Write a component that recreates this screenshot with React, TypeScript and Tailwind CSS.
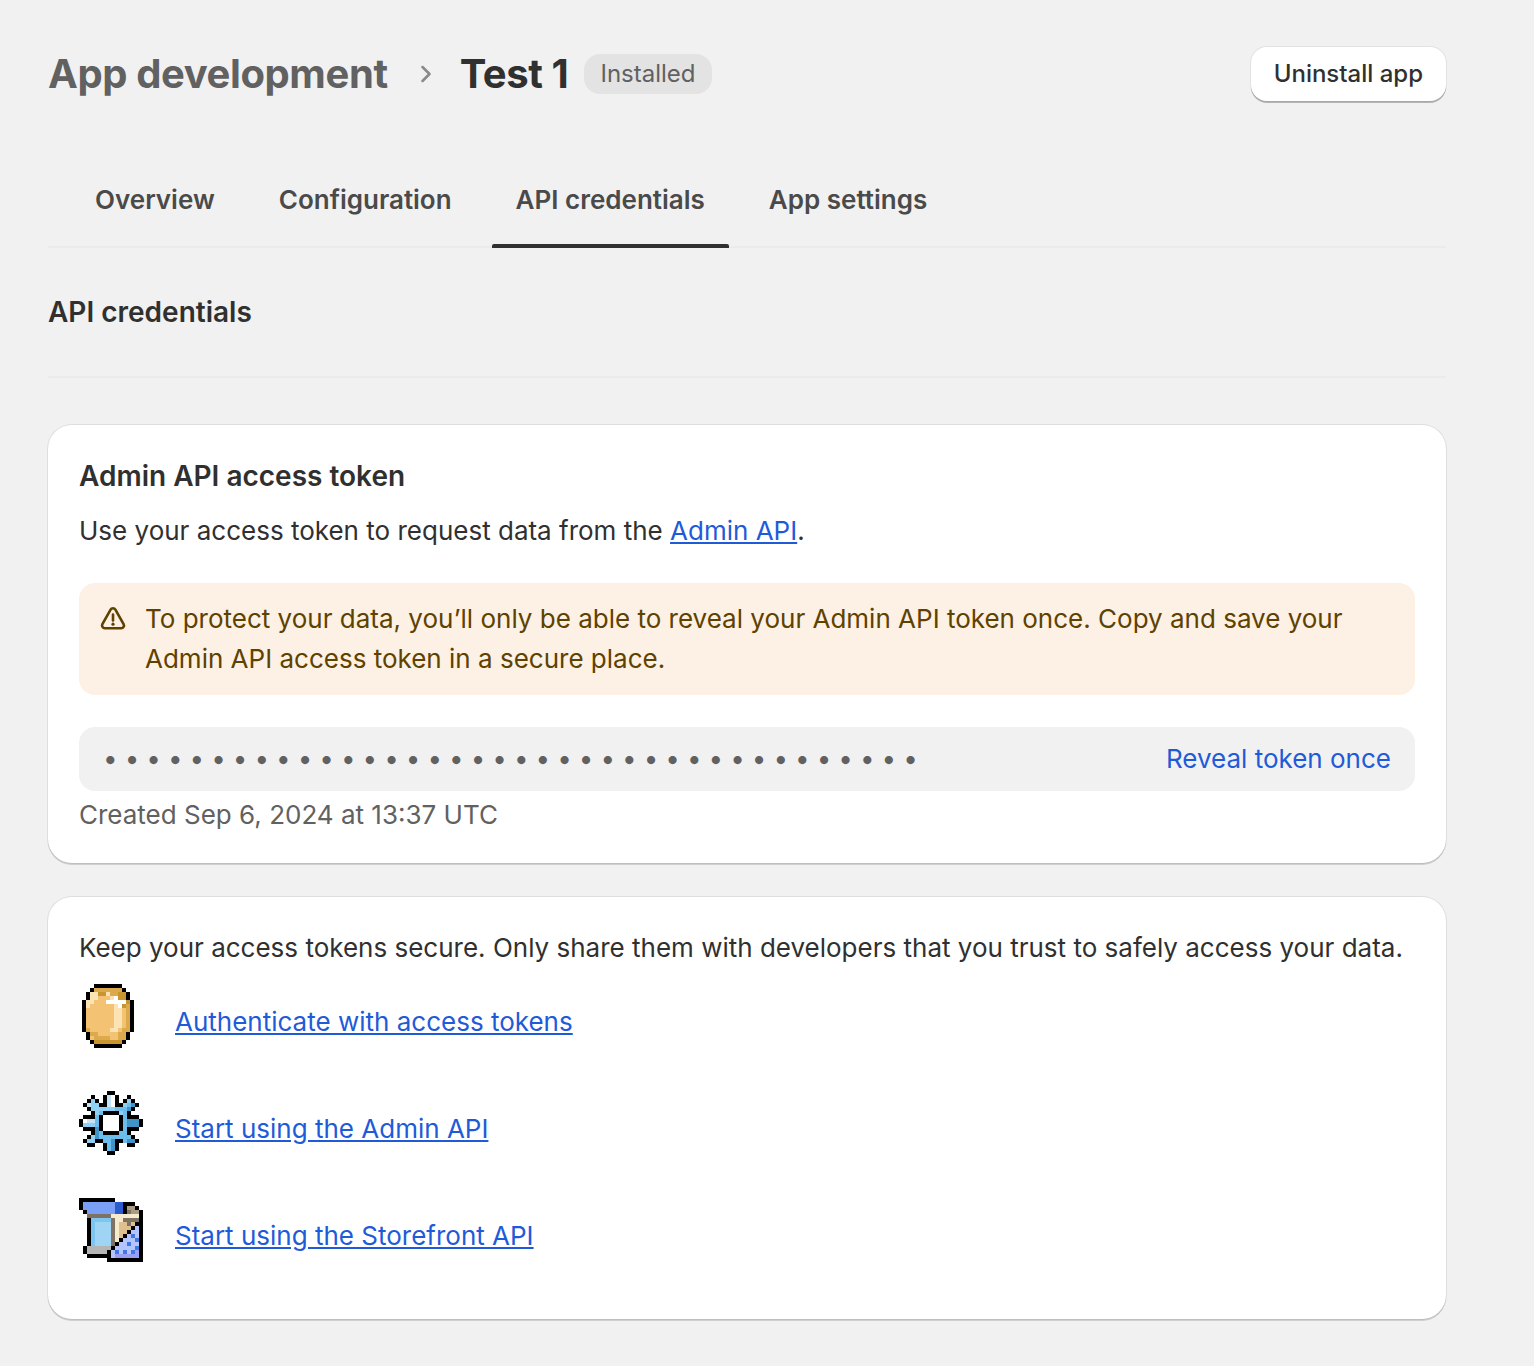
import { ChevronRight } from 'lucide-react';

const COLORS: Record<string, string> = {
  K: '#000000', W: '#ffffff',
  // coin
  O: '#f3c272', D: '#c9952f', L: '#fbe3b4', M: '#dcaa4c',
  // gear
  B: '#6cbcec', E: '#c4e4f8', F: '#3f94c8', H: '#8fd0f4',
  // blueprint
  P: '#7aa0f5', Q: '#2c5bd0', G: '#7d7264', C: '#7cc6f0', I: '#a0d4f4', T: '#f5eacb',
  S: '#e0bf8f', A: '#aa9c82', Y: '#b5b5b5', V: '#b3c4ff', N: '#3f78e0', U: '#9a9df5',
};

const COIN = [
  '...KKKKKKK...',
  '..KMMMMMMMK..',
  '.KLLDDLMMDDK.',
  '.KLLOOOLWDDK.',
  'KLLOOOWWWWWDK',
  'KLOOOOOOLWDMK',
  'KOOOOOOOLLOMK',
  'KOOOOOOOLLOMK',
  'KOOOOOOOLLOMK',
  'KOOOOOOOLLOMK',
  'KOOOOOOOLLOMK',
  'KMOOOOOLLOMMK',
  '.KMMOOOOOMMK.',
  '.KOMMMMOOMMK.',
  '..KDDDDDDDK..',
  '...KKKKKKK...',
];

const GEAR = [
  '.......KK.......',
  '...K..KEWK..K...',
  '..KHK.KEWK.KHK..',
  '.KEHHKKEWKKHBFK.',
  '..KHHHHHHBBBFK..',
  '...KHBKKKKHBK...',
  '.KKKBKWWWWKBKKK.',
  'KWEEBKWWWWKBFFFK',
  'KHHHBKWWWWKBFFFK',
  '.KKKFKWWWWKBKKK.',
  '...KFBKKKKBBK...',
  '..KHFBBBBBBBBK..',
  '.KHHKKBBFKKBFFK.',
  '..KK..KBFK..KK..',
  '......KBFK......',
  '.......KK.......',
];

const BLUEPRINT = [
  'KKKKKKKKK.......',
  'KPPPPPPPPQQKKK..',
  'KPPPPPPPPQQKAAK.',
  '.KPPPPPPPQQKGAAK',
  '..GGGGGGTTTTTTTK',
  '..KCCCCCGTTGGGGK',
  '..KCIIIIGTSSGSKK',
  '..KCIIIIGTSSSKVK',
  '..KCIIIIGTSSKVVK',
  '..KCIIIIGTSKVNVK',
  '..KCIIIIGTKVVVNK',
  '..KCIIIIGKVVNVVK',
  '.KYYYYYYKVVVVVNK',
  '.KYYYYYKVNVNVNUK',
  '..KKKKKKVUUUUUUK',
  '.......KKKKKKKKK',
];

function Pixels({ rows }: { rows: string[] }) {
  const cols = rows[0].length;
  return (
    <svg width={cols * 4} height={rows.length * 4} viewBox={`0 0 ${cols} ${rows.length}`} shapeRendering="crispEdges" className="block">
      {rows.flatMap((row, y) =>
        row.split('').map((c, x) =>
          c === '.' ? null : <rect key={`${x}-${y}`} x={x} y={y} width={1} height={1} fill={COLORS[c]} />
        )
      )}
    </svg>
  );
}

function AlertIcon() {
  return (
    <svg width="28" height="28" viewBox="0 0 28 28" fill="none" className="block">
      <path d="M11.6 4.6c1-1.8 3.7-1.8 4.8 0l8.2 14.6c1 1.8-.3 4-2.4 4H5.8c-2.1 0-3.4-2.2-2.4-4z" stroke="#5e4200" strokeWidth="2.6" strokeLinejoin="round" />
      <path d="M14 9.5v6" stroke="#5e4200" strokeWidth="2.6" strokeLinecap="round" />
      <circle cx="14" cy="19.2" r="1.6" fill="#5e4200" />
    </svg>
  );
}

const TABS = ['Overview', 'Configuration', 'API credentials', 'App settings'];

const LINKS = [
  { label: 'Authenticate with access tokens', rows: COIN, pad: 'pl-[3px]' },
  { label: 'Start using the Admin API', rows: GEAR, pad: '' },
  { label: 'Start using the Storefront API', rows: BLUEPRINT, pad: '' },
];

const cardClass =
  'rounded-[24px] bg-white shadow-[0_0_0_1px_rgba(0,0,0,0.08),0_2px_0_0_rgba(0,0,0,0.14)]';

export default function App() {
  return (
    <div className="min-h-[1366px] bg-[#f1f1f1] pl-[48px] pr-[88px] pt-[47px] text-[26px] leading-[40px] text-[#303030] [font-family:Inter,'Liberation_Sans',sans-serif]">
      {/* Header */}
      <div className="flex h-[54px] items-center justify-between">
        <div className="flex items-center">
          <span className="text-[40px] font-bold leading-[54px] tracking-[-0.4px] text-[#616161]">App development</span>
          <ChevronRight className="ml-[24px] h-[28px] w-[28px] text-[#8a8a8a]" strokeWidth={2.2} />
          <span className="ml-[20px] text-[40px] font-bold leading-[54px] tracking-[-0.4px]">Test 1</span>
          <span className="ml-[16px] flex h-[40px] items-center rounded-[16px] bg-[#e3e3e3] px-[16px] text-[24px] text-[#616161]">Installed</span>
        </div>
        <button className="flex h-[54px] items-center rounded-[16px] bg-white px-[23px] text-[24px] font-medium shadow-[0_0_0_1px_rgba(0,0,0,0.06),0_2px_0_0_rgba(0,0,0,0.25)]">
          Uninstall app
        </button>
      </div>

      {/* Tabs */}
      <div className="mt-[51px] flex h-[96px] border-b-2 border-[#ebebeb]">
        {TABS.map((tab, i) => (
          <div key={tab} className={`relative flex h-[96px] items-center px-[24px] ${i === 0 ? 'ml-[23px]' : 'ml-[16px]'} text-[26px] font-semibold ${i === 2 ? 'text-[#4a4a4a]' : 'text-[#4a4a4a]'}`}>
            {tab}
            {i === 2 && <div className="absolute inset-x-0 bottom-0 h-[4px] rounded-t-[2px] bg-[#303030]" />}
          </div>
        ))}
      </div>

      {/* Section heading */}
      <div className="flex h-[130px] items-center border-b-2 border-[#ebebeb] text-[28px] font-semibold">API credentials</div>

      {/* Token card */}
      <div className={`${cardClass} mt-[47px] h-[438px] px-[31px] pt-[31px]`}>
        <div className="text-[28px] font-semibold">Admin API access token</div>
        <p className="mt-[15px]">
          Use your access token to request data from the <a className="text-[#1f5bd8] underline">Admin API</a>.
        </p>
        <div className="mt-[32px] flex h-[112px] gap-[18px] rounded-[16px] bg-[#fdf0e4] px-[20px] pt-[16px] text-[#5e4200]">
          <div className="pt-[6px]"><AlertIcon /></div>
          <p>To protect your data, you’ll only be able to reveal your Admin API token once. Copy and save your Admin API access token in a secure place.</p>
        </div>
        <div className="mt-[32px] flex h-[64px] items-center justify-between rounded-[16px] bg-[#f1f1f1] pl-[24px] pr-[24px]">
          <span className="tracking-[7px] text-[#616161]">{'•'.repeat(38)}</span>
          <a className="text-[#1f5bd8]">Reveal token once</a>
        </div>
        <p className="mt-[4px] text-[#616161]">Created Sep 6, 2024 at 13:37 UTC</p>
      </div>

      {/* Links card */}
      <div className={`${cardClass} mt-[34px] h-[422px] px-[31px] pt-[31px]`}>
        <p>Keep your access tokens secure. Only share them with developers that you trust to safely access your data.</p>
        <div className="mt-[16px] flex flex-col gap-[43px]">
          {LINKS.map((l) => (
            <div key={l.label} className="flex h-[64px] items-center">
              <div className={`w-[96px] shrink-0 ${l.pad}`}><Pixels rows={l.rows} /></div>
              <a className="mt-[12px] text-[#1f5bd8] underline">{l.label}</a>
            </div>
          ))}
        </div>
      </div>
    </div>
  );
}
